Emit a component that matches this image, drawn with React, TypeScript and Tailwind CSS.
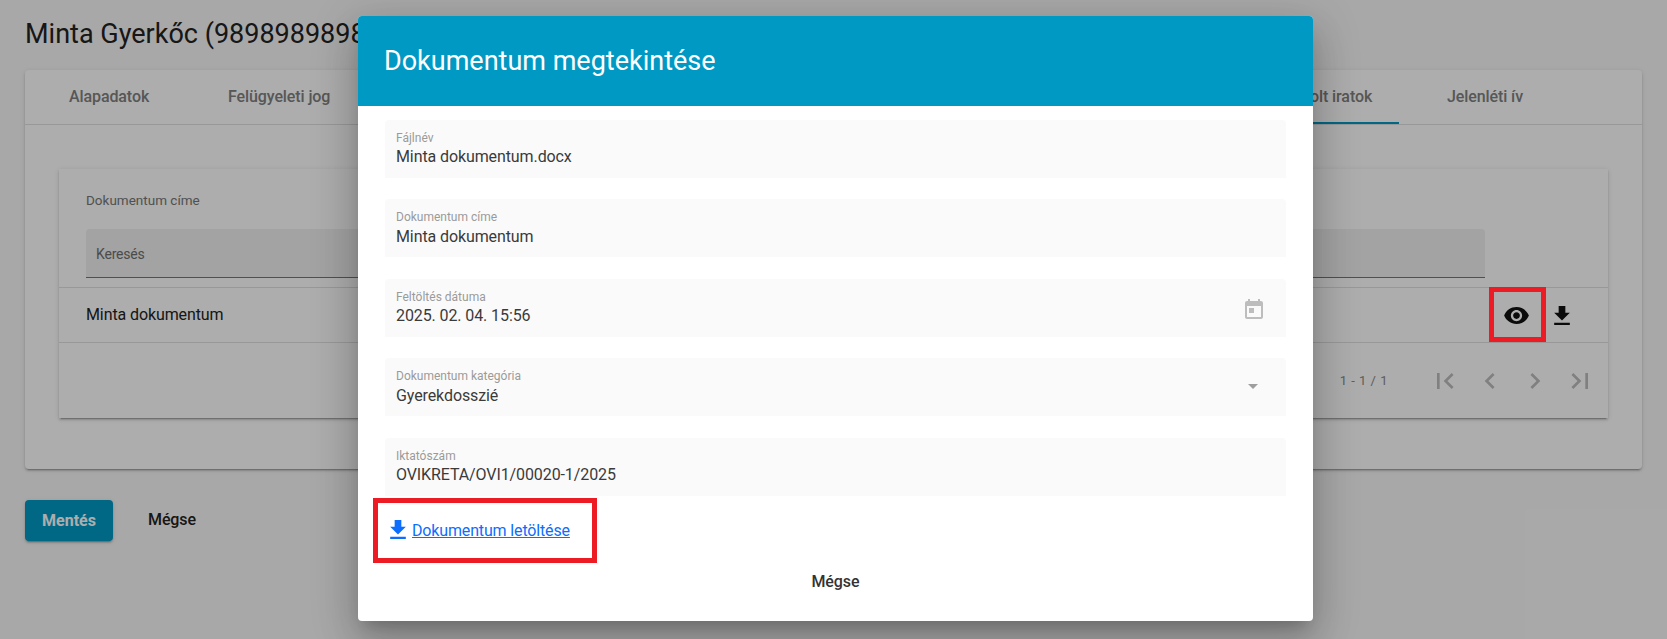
const CARD_SHADOW =
  "shadow-[0_3px_1px_-2px_rgba(0,0,0,0.2),0_2px_2px_0_rgba(0,0,0,0.14),0_1px_5px_0_rgba(0,0,0,0.12)]";

const DOWNLOAD_PATH = "M19 9h-4V3H9v6H5l7 7 7-7zM5 18v2h14v-2H5z";

const PAGER_ICONS = [
  "M18.41 16.59L13.82 12l4.59-4.59L17 6l-6 6 6 6zM6 6h2v12H6z",
  "M15.41 7.41L14 6l-6 6 6 6 1.41-1.41L10.83 12z",
  "M10 6L8.59 7.41 13.17 12l-4.58 4.59L10 18l6-6z",
  "M5.59 7.41L10.18 12l-4.59 4.59L7 18l6-6-6-6zM16 6h2v12h-2z",
];

function DownloadIcon({ className }: { className: string }) {
  return (
    <svg viewBox="5 3 14 17" className={className} fill="currentColor">
      <path d={DOWNLOAD_PATH} />
    </svg>
  );
}

function Field({
  label,
  value,
  children,
}: {
  label: string;
  value: string;
  children?: React.ReactNode;
}) {
  return (
    <div className="relative h-[58px] rounded-t bg-[#fafafa] pl-[11px] pt-[11px]">
      <div className="text-[12px] leading-[14px] text-[#9a9a9a]">{label}</div>
      <div className="mt-[2.4px] text-[16px] leading-[20px] tracking-[-0.1px] text-[#3a3a3a]">{value}</div>
      {children}
    </div>
  );
}

function Background() {
  return (
    <div className="h-full bg-[#f8f8f8] px-[25px] pt-[19px]">
      <h1 className="h-[51px] text-[27px] leading-[30px] text-[#222222]">
        Minta Gyerkőc (9898989898)
      </h1>

      <div className={`h-[399px] rounded bg-white ${CARD_SHADOW}`}>
        <div className="flex h-[55px] border-b border-[#e0e0e0] text-[16px] font-medium tracking-[-0.1px] text-[#808080]">
          <div className="ml-[44px] w-[159px] pt-[15px]">Alapadatok</div>
          <div className="w-[880px] pt-[15px]">Felügyeleti jog</div>
          <div className="relative w-[291px] pt-[15px] pl-[170px]">
            Csatolt iratok
            <div className="absolute bottom-0 left-0 right-0 h-[2px] bg-[#0099c3]" />
          </div>
          <div className="ml-[48px] pt-[15px]">Jelenléti ív</div>
        </div>

        <div className={`mx-[34px] mt-[44px] h-[249px] bg-white ${CARD_SHADOW}`}>
          <div className="h-[60px] pl-[27px] pt-[21px] text-[13.5px] leading-[20px] text-[#777777]">
            Dokumentum címe
          </div>
          <div className="ml-[27px] flex h-[49px] w-[1399px] items-center rounded-t border-b border-[#777777] bg-[#f0f0f0] pl-[10px] pt-[2px] text-[14px] tracking-[-0.2px] text-[#6f6f6f]">
            Keresés
          </div>
          <div className="mt-[9px] flex h-[56px] items-center border-y border-[#e0e0e0] pl-[27px] pr-[38px] text-[16px] tracking-[-0.1px] text-[#222222]">
            <span className="flex-1">Minta dokumentum</span>
            <svg viewBox="0 0 24 24" className="h-[27px] w-[27px]" fill="#111111">
              <path d="M12 4.5C7 4.5 2.73 7.61 1 12c1.73 4.39 6 7.5 11 7.5s9.27-3.11 11-7.5c-1.73-4.39-6-7.5-11-7.5zM12 17c-2.76 0-5-2.24-5-5s2.24-5 5-5 5 2.24 5 5-2.24 5-5 5zm0-8c-1.66 0-3 1.34-3 3s1.34 3 3 3 3-1.34 3-3-1.34-3-3-3z" />
            </svg>
            <DownloadIcon className="ml-[24px] h-[19px] w-[16px] text-[#111111]" />
          </div>
          <div className="flex h-[76px] items-center justify-end pr-[12px]">
            <span className="mr-[41px] text-[13px] tracking-[0.5px] text-[#8a8a8a]">1 - 1 / 1</span>
            <div className="flex gap-[13px]">
              {PAGER_ICONS.map((d) => (
                <svg key={d} viewBox="0 0 24 24" className="h-[32px] w-[32px]" fill="#bdbdbd">
                  <path d={d} />
                </svg>
              ))}
            </div>
          </div>
        </div>
      </div>

      <div className="mt-[31px] flex items-center">
        <button
          type="button"
          className={`h-[41px] w-[88px] rounded bg-[#0099c3] text-[16px] font-bold text-white ${CARD_SHADOW}`}
        >
          Mentés
        </button>
        <button type="button" className="mb-[2px] ml-[35px] text-[16px] font-medium tracking-[-0.1px] text-[#222222]">
          Mégse
        </button>
      </div>
    </div>
  );
}

function DocumentDialog() {
  return (
    <div className="absolute left-[358px] top-[16px] h-[605px] w-[955px] overflow-hidden rounded bg-white shadow-[0_11px_15px_-7px_rgba(0,0,0,0.2),0_24px_38px_3px_rgba(0,0,0,0.14),0_9px_46px_8px_rgba(0,0,0,0.12)]">
      <div className="flex h-[90px] items-center bg-[#0099c3] pl-[26px] pr-[27px] text-[27px] text-white">
        Dokumentum megtekintése
      </div>

      <div className="flex flex-col gap-[21.4px] pl-[27px] pr-[27px] pt-[14px]">
        <Field label="Fájlnév" value="Minta dokumentum.docx" />
        <Field label="Dokumentum címe" value="Minta dokumentum" />
        <Field label="Feltöltés dátuma" value="2025. 02. 04. 15:56">
          <svg
            viewBox="0 0 24 24"
            className="absolute right-[20px] top-[19px] h-[24px] w-[24px]"
            fill="#bdbdbd"
          >
            <path d="M19 3h-1V1h-2v2H8V1H6v2H5c-1.11 0-1.99.9-1.99 2L3 19c0 1.1.89 2 2 2h14c1.1 0 2-.9 2-2V5c0-1.1-.9-2-2-2zm0 16H5V8h14v11zM7 10h5v5H7z" />
          </svg>
        </Field>
        <Field label="Dokumentum kategória" value="Gyerekdosszié">
          <div className="absolute right-[28px] top-[26px] h-0 w-0 border-x-[5px] border-t-[5px] border-x-transparent border-t-[#9e9e9e]" />
        </Field>
        <Field label="Iktatószám" value="OVIKRETA/OVI1/00020-1/2025" />
      </div>

      <div className="ml-[15px] mt-[2px] flex h-[65px] w-[224px] items-center gap-[6px] border-[5px] border-[#ed1c24] pl-[12px] text-[#0d6efd]">
        <DownloadIcon className="-mt-px h-[19px] w-[16px]" />
        <a href="#" className="pt-[2px] text-[16px] leading-[20px] tracking-[-0.15px] underline">
          Dokumentum letöltése
        </a>
      </div>

      <div className="mt-[8px] text-center text-[16px] font-medium leading-[22px] tracking-[-0.05px] text-[#333333]">
        Mégse
      </div>
    </div>
  );
}

export default function App() {
  return (
    <div className="relative h-[639px] overflow-hidden font-[Roboto,sans-serif]">
      <Background />
      <div className="absolute inset-0 bg-black/32" />
      <DocumentDialog />
      {/* kiemelés a szem ikon körül, a sötétítés fölött */}
      <div className="absolute left-[1489px] top-[287px] h-[55px] w-[57px] border-[5px] border-[#ed1c24]" />
    </div>
  );
}
